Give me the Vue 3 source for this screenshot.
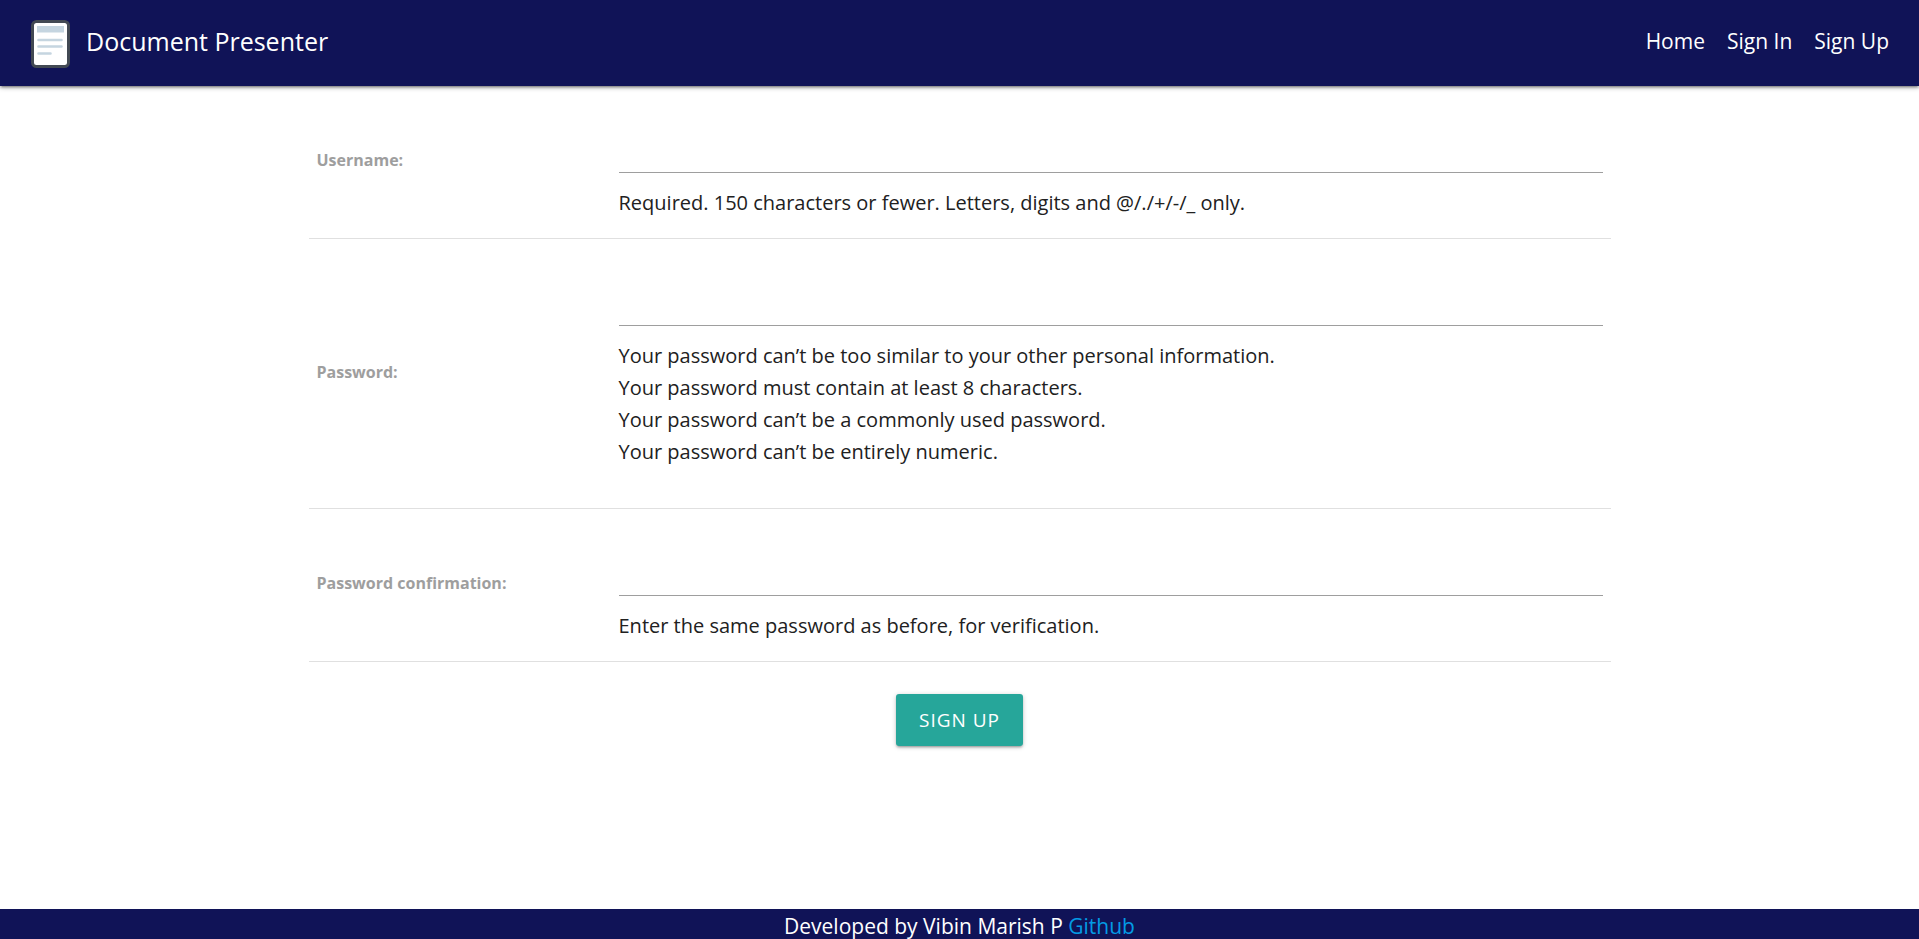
<script setup>
import { reactive } from 'vue'

const links = ['Home', 'Sign In', 'Sign Up']

const fields = [
  {
    id: 'username',
    label: 'Username:',
    type: 'text',
    help: 'Required. 150 characters or fewer. Letters, digits and @/./+/-/_ only.',
  },
  {
    id: 'password1',
    label: 'Password:',
    type: 'password',
    rules: [
      'Your password can’t be too similar to your other personal information.',
      'Your password must contain at least 8 characters.',
      'Your password can’t be a commonly used password.',
      'Your password can’t be entirely numeric.',
    ],
  },
  {
    id: 'password2',
    label: 'Password confirmation:',
    type: 'password',
    help: 'Enter the same password as before, for verification.',
  },
]

const values = reactive({ username: '', password1: '', password2: '' })
</script>

<template>
  <div class="page">
    <header class="bar">
      <a class="brand" href="#">
        <svg class="logo" viewBox="0 0 40 50" aria-hidden="true">
          <rect x="2.500" y="3.500" width="36" height="45" rx="4" fill="#fff" stroke="#424953" stroke-width="3" />
          <rect x="7" y="8" width="27" height="6.500" fill="#c5d5e0" />
          <g stroke="#c5d5e0" stroke-width="2.600" stroke-linecap="round">
            <path d="M8.500 22H31.500M8.500 28.500H31.500M8.500 35.500H20.500" />
          </g>
        </svg>
        <span class="title">Document Presenter</span>
      </a>
      <nav class="links">
        <a v-for="link in links" :key="link" href="#">{{ link }}</a>
      </nav>
    </header>

    <main class="content">
      <form @submit.prevent>
        <table class="fields">
          <tbody>
            <tr v-for="field in fields" :key="field.id">
              <th scope="row"><label :for="field.id">{{ field.label }}</label></th>
              <td>
                <input :id="field.id" v-model="values[field.id]" :type="field.type" autocomplete="off" />
                <ul v-if="field.rules" class="rules">
                  <li v-for="rule in field.rules" :key="rule">{{ rule }}</li>
                </ul>
                <span v-else class="help">{{ field.help }}</span>
              </td>
            </tr>
          </tbody>
        </table>
        <div class="actions">
          <button type="submit">SIGN UP</button>
        </div>
      </form>
    </main>

    <footer class="footer">Developed by Vibin Marish P <a href="#">Github</a></footer>
  </div>
</template>

<style>
body {
  margin: 0;
  background: #fff;
}
</style>

<style scoped>
.page {
  display: flex;
  flex-direction: column;
  min-height: 100vh;
  font-family: "Segoe UI", "Open Sans", "Noto Sans", sans-serif;
  font-size: 20px;
  line-height: 32px;
  color: #212121;
}

a {
  color: inherit;
  text-decoration: none;
}

.bar {
  display: flex;
  align-items: center;
  justify-content: space-between;
  box-sizing: border-box;
  height: 86px;
  padding: 0 30px;
  background: #101357;
  color: #fff;
  box-shadow: 0 2px 2px 0 rgba(0, 0, 0, 0.14), 0 3px 1px -2px rgba(0, 0, 0, 0.12), 0 1px 5px 0 rgba(0, 0, 0, 0.4);
}

.brand {
  display: flex;
  align-items: center;
  gap: 16px;
  font-size: 25px;
}

.logo {
  width: 40px;
  height: 50px;
}

.title {
  padding-bottom: 4px;
}

.links {
  display: flex;
  gap: 22px;
  padding-bottom: 4px;
  font-size: 21px;
}

.content {
  flex: 1;
  width: 70%;
  max-width: 1302px;
  margin: 0 auto;
}

.fields {
  width: 100%;
  border-collapse: collapse;
  table-layout: fixed;
}

tr {
  border-bottom: 1px solid #e0e0e0;
}

th,
td {
  padding: 21px 8px 19px;
  text-align: left;
  vertical-align: middle;
}

th {
  width: 286px;
  padding-bottom: 26px;
}

label {
  font-size: 16px;
  font-weight: 700;
  color: #9e9e9e;
}

input {
  display: block;
  box-sizing: border-box;
  width: 100%;
  height: 66px;
  margin: 0 0 14px;
  padding: 0;
  border: 0;
  border-bottom: 1px solid #9e9e9e;
  background: transparent;
  font: inherit;
  outline: none;
}

.help {
  display: block;
}

.rules {
  margin: 0 0 21px;
  padding: 0;
  list-style: none;
}

.actions {
  display: flex;
  justify-content: center;
  padding: 32px 0;
}

button {
  height: 52px;
  padding: 0 23px;
  border: 0;
  border-radius: 3px;
  background: #26a69a;
  color: #fff;
  font-family: inherit;
  font-size: 19px;
  letter-spacing: 1px;
  cursor: pointer;
  box-shadow: 0 2px 2px 0 rgba(0, 0, 0, 0.14), 0 3px 1px -2px rgba(0, 0, 0, 0.12), 0 1px 5px 0 rgba(0, 0, 0, 0.2);
}

.footer {
  height: 30px;
  line-height: 34px;
  font-size: 21px;
  background: #101357;
  color: #fff;
  text-align: center;
  overflow: hidden;
}

.footer a {
  color: #039be5;
}
</style>
